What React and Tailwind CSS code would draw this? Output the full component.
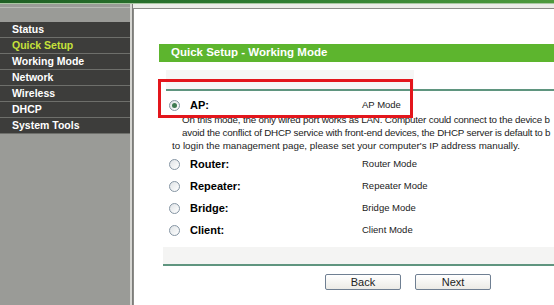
import React from 'react'

const menu = ['Status', 'Quick Setup', 'Working Mode', 'Network', 'Wireless', 'DHCP', 'System Tools']

const modes = [
  { label: 'Router:', text: 'Router Mode' },
  { label: 'Repeater:', text: 'Repeater Mode' },
  { label: 'Bridge:', text: 'Bridge Mode' },
  { label: 'Client:', text: 'Client Mode' },
]

function Radio({ checked }) {
  return (
    <div className="w-[11px] h-[11px] rounded-full border border-[#8595a3] bg-gradient-to-br from-[#dfe3e6] to-[#ffffff] flex items-center justify-center">
      {checked && <div className="w-[5px] h-[5px] rounded-full bg-[#3f7a52]" />}
    </div>
  )
}

function ModeRow({ label, text, checked, className = '' }) {
  return (
    <div className={`flex items-center h-[22px] ${className}`}>
      <div className="w-[24px] pl-[3px] shrink-0">
        <Radio checked={checked} />
      </div>
      <div className="w-[172px] shrink-0 text-[11px] font-bold text-black">{label}</div>
      <div className="text-[9.5px] text-[#222] whitespace-nowrap">{text}</div>
    </div>
  )
}

export default function App() {
  return (
    <div
      className="w-[554px] h-[305px] overflow-hidden flex flex-col bg-white"
      style={{ fontFamily: '"Liberation Sans", Arial, sans-serif' }}
    >
      {/* top brand strip */}
      <div className="h-[3px] bg-gradient-to-r from-[#1f5f24] via-[#2f7d31] to-[#4d9a3c]" />
      <div className="h-[1px] bg-[#a9c7a2]" />

      <div className="flex flex-1 min-h-0">
        {/* sidebar */}
        <div className="w-[130px] shrink-0 bg-[#9a9b97] flex flex-col">
          <div className="h-[3px]" />
          <div className="h-[1px] bg-[#b9bab6]" />
          <div className="h-[14px]" />
          {menu.map((item) => (
            <div key={item} className="h-[16px] bg-[#3d3d3b] border-b border-[#6e6f6b] flex items-center pl-[12px]">
              <span
                className={`text-[10.5px] font-bold leading-none whitespace-nowrap ${item === 'Quick Setup' ? 'text-[#c6e23a]' : 'text-white'}`}
              >
                {item}
              </span>
            </div>
          ))}
        </div>

        {/* divider */}
        <div className="w-[2px] shrink-0 bg-[#d6d6d2]" />
        <div className="w-[1px] shrink-0 bg-[#7d7d7a]" />

        {/* main */}
        <div className="flex-1 min-w-0 flex flex-col bg-[#ecece8]">
          <div className="h-[4px]" />
          <div className="flex-1 bg-white border-t border-l border-[#8c8c88] relative overflow-hidden">
            <div className="mt-[35px] ml-[25px] h-[18px] bg-[#5db52e] flex items-center pl-[12px]">
              <span className="text-[11.5px] font-bold text-white whitespace-nowrap">Quick Setup - Working Mode</span>
            </div>

            <div className="mt-[8px] ml-[32px]">
              <div className="h-[19px] w-[248px] bg-[#f6f6f5]" />
              <div className="h-[2px] bg-[#5f957f]" />

              <ModeRow label="AP:" text="AP Mode" checked className="mt-[3px]" />

              <div className="-mt-[3px] text-[9.8px] leading-[13px] text-[#222] whitespace-nowrap">
                <div className="pl-[16px] tracking-[-0.2px]">On this mode, the only wired port works as LAN. Computer could connect to the device b</div>
                <div className="pl-[16px] tracking-[-0.2px]">avoid the conflict of DHCP service with front-end devices, the DHCP server is default to b</div>
                <div className="pl-[6px]">to login the management page, please set your computer's IP address manually.</div>
              </div>

              <div className="mt-[1px]">
                {modes.map((m) => (
                  <ModeRow key={m.label} label={m.label} text={m.text} />
                ))}
              </div>

              <div className="-ml-[3px] mt-[6px]">
                <div className="h-[17px] bg-[#f4f4f3]" />
                <div className="h-[2px] bg-[#5f957f]" />
              </div>

              <div className="mt-[8px] flex pl-[159px] gap-[14px]">
                <button className="w-[76px] h-[16px] rounded-[2px] border border-[#6f7f92] bg-gradient-to-b from-[#ffffff] to-[#ecebe6] text-[11px] leading-none text-[#222]">
                  Back
                </button>
                <button className="w-[76px] h-[16px] rounded-[2px] border border-[#6f7f92] bg-gradient-to-b from-[#ffffff] to-[#ecebe6] text-[11px] leading-none text-[#222]">
                  Next
                </button>
              </div>
            </div>

            {/* annotation box */}
            <div className="absolute left-[24px] top-[70px] w-[255px] h-[39px] border-[3px] border-[#e3161c] pointer-events-none" />
          </div>
        </div>
      </div>
    </div>
  )
}
